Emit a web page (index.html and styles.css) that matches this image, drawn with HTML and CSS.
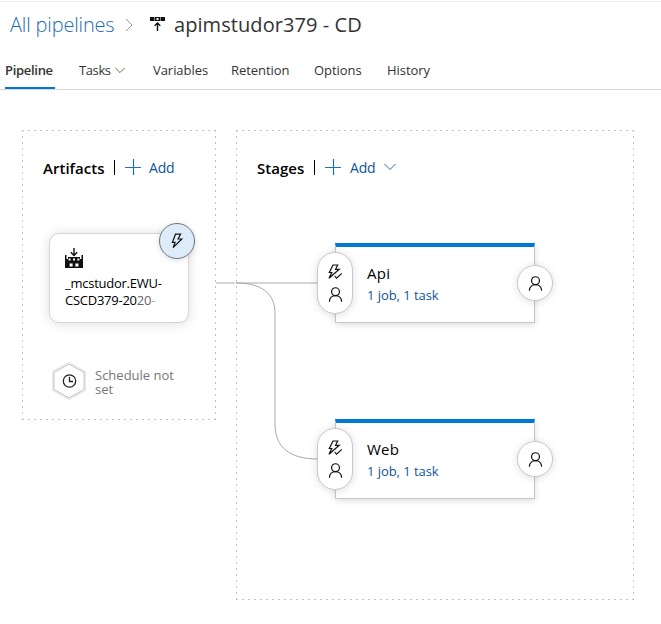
FILE: index.html
```
<!DOCTYPE html>
<html lang="en">
<head>
<meta charset="utf-8">
<title>apimstudor379 - CD</title>
<link rel="stylesheet" href="styles.css">
</head>
<body>
<svg class="symbols" width="0" height="0" aria-hidden="true">
  <symbol id="person" viewBox="0 0 16 16"><circle cx="8" cy="5" r="4.2"/><path d="M1.500 15.800C1.500 11.500 4.600 9.200 8 9.200s6.500 2.300 6.500 6.600"/></symbol>
  <symbol id="bolt" viewBox="0 0 16 16"><path d="M6.500 1.200h5.100L9.100 6h3.700L4.100 14.700l2-5.300H3.400z"/></symbol>
  <symbol id="bolt-check" viewBox="0 0 16 16"><path d="M12.200 5.300H8.600L10.700 1H6L2.300 8.500h2.500L2 14.300z"/><path d="M7.700 12.200l1.900 1.900 5.200-4.700"/></symbol>
  <symbol id="plus" viewBox="0 0 16 16"><path d="M0 8.500h16M8.500 0v16"/></symbol>
  <symbol id="chevron" viewBox="0 0 12 8"><path d="M.5 1L6 6.500 11.500 1"/></symbol>
</svg>
<header class="header">
  <nav class="breadcrumb">
    <a class="crumb">All pipelines</a>
    <svg class="crumb-arrow" viewBox="0 0 8 14"><path d="M1 1l6 6-6 6"/></svg>
    <svg class="release-icon" viewBox="0 0 15 15"><path class="solid" d="M0 0h4.500v4H0zM5 0h5v4H5zM10.500 0H15v4h-4.500z"/><path class="holes" d="M6.500 1h2v2h-2z"/><path class="line" d="M7.500 14V6M4.700 8.800l2.800-2.800 2.800 2.800"/></svg>
    <h1 class="title">apimstudor379 - CD</h1>
  </nav>
  <nav class="tabs">
    <a class="tab tab-active">Pipeline</a>
    <a class="tab tab-tasks">Tasks<svg class="tab-chevron" viewBox="0 0 12 8"><use href="#chevron"/></svg></a>
    <a class="tab tab-variables">Variables</a>
    <a class="tab tab-retention">Retention</a>
    <a class="tab tab-options">Options</a>
    <a class="tab">History</a>
  </nav>
</header>
<main class="canvas">
  <section class="panel artifacts">
    <div class="panel-head">
      <h2 class="heading heading-artifacts">Artifacts</h2><span class="divider"></span>
      <svg class="plus"><use href="#plus"/></svg><a class="add">Add</a>
    </div>
    <div class="artifact">
      <svg class="build-icon" viewBox="0 0 18 20"><path class="solid" d="M0 7h1.500v4H3V9h12v2h1.500V7H18v13H0z"/><path class="holes" d="M3.600 10.500h2v2h-2zM8 10.500h2v2H8zM12.400 10.500h2v2h-2zM4.600 15.500h3v3h-3zM10.400 15.500h3v3h-3z"/><path class="line" d="M9 0v7.500M5.800 4.300L9 7.500l3.200-3.200"/></svg>
      <div class="artifact-name">_mcstudor.EWU-<br>CSCD379-20<span class="fade-a">20</span><span class="fade-b">-</span></div>
      <span class="trigger"><svg class="bolt"><use href="#bolt"/></svg></span>
    </div>
    <div class="schedule">
      <svg class="hexagon" viewBox="0 0 36 40"><path class="hex-halo" d="M18 2.500l15.500 8.500v18L18 37.500 2.500 29V11z"/><path class="hex-edge" d="M18 3.200L33 11.500v17L18 36.800 3 28.500v-17z"/><circle cx="18.500" cy="20" r="6.200"/><path class="hand" d="M18.500 16v4.500H22"/></svg>
      <div class="schedule-text">Schedule not<br>set</div>
    </div>
  </section>
  <section class="panel stages">
    <div class="panel-head">
      <h2 class="heading heading-stages">Stages</h2><span class="divider"></span>
      <svg class="plus"><use href="#plus"/></svg><a class="add add-stage">Add</a><svg class="add-chevron"><use href="#chevron"/></svg>
    </div>
    <article class="stage">
      <span class="pre"><svg class="bolt-check"><use href="#bolt-check"/></svg><svg class="person" viewBox="0 0 16 16"><use href="#person"/></svg></span>
      <h3 class="stage-name">Api</h3><a class="stage-jobs">1 job, 1 task</a>
      <span class="post"><svg class="person" viewBox="0 0 16 16"><use href="#person"/></svg></span>
    </article>
    <article class="stage">
      <span class="pre"><svg class="bolt-check"><use href="#bolt-check"/></svg><svg class="person" viewBox="0 0 16 16"><use href="#person"/></svg></span>
      <h3 class="stage-name">Web</h3><a class="stage-jobs">1 job, 1 task</a>
      <span class="post"><svg class="person" viewBox="0 0 16 16"><use href="#person"/></svg></span>
    </article>
    <svg class="connectors" viewBox="0 0 110 190"><path class="straight" d="M1 7h19M21 7h85"/><path class="curve" d="M21 7c25 0 39 10 39 30"/><path class="straight" d="M60 36v112"/><path class="curve" d="M60 148c0 23 14 35 43 35"/></svg>
  </section>
</main>
</body>
</html>
```
FILE: styles.css
```
* { box-sizing: border-box; }
body { margin: 0; width: 661px; height: 624px; overflow: hidden; background: #fff; color: #333; font-family: "Open Sans", "Noto Sans", sans-serif; font-size: 13px; }
h1, h2, h3 { margin: 0; font-weight: 400; }
svg { display: block; flex: none; fill: none; overflow: visible; }
.symbols { position: absolute; }
.header { height: 89px; margin-top: 1px; border-top: 1px solid #eaeaea; border-bottom: 1px solid #d9d9d9; }
.breadcrumb { display: flex; align-items: center; height: 46px; padding: 0 0 2px 10px; font-size: 20px; white-space: nowrap; }
.crumb { width: 115px; color: #1f6cad; letter-spacing: -0.17px; font-weight: 300; }
.crumb-arrow { width: 8px; height: 14px; stroke: #999; margin-top: 2px; }
.release-icon { width: 15px; height: 15px; margin: 0 9px 0 17px; }
.solid { fill: #111; }
.holes { fill: #fff; }
.line { stroke: #111; stroke-width: 1.4; }
.title { font-size: 20px; letter-spacing: 0.07px; }
.tabs { display: flex; height: 41px; padding-left: 5px; line-height: 45px; white-space: nowrap; }
.tab { letter-spacing: -0.05px; }
.tab-active { width: 50px; margin-right: 24px; font-weight: 600; letter-spacing: -0.3px; border-bottom: 2px solid #0078d4; }
.tab-tasks { display: flex; width: 74px; letter-spacing: -0.4px; }
.tab-chevron { width: 10px; height: 7px; margin: 19px 0 0 4px; stroke: #55764b; stroke-width: 1.2; }
.tab-variables { width: 78px; }
.tab-retention { width: 83px; }
.tab-options { width: 73px; }
.canvas { display: flex; align-items: flex-start; gap: 20px; padding: 40px 0 0 22px; }
.panel {
  position: relative;
  background:
    repeating-linear-gradient(90deg, #c3c3c3 0 2px, transparent 2px 6px) 0 0 / 100% 1px no-repeat,
    repeating-linear-gradient(90deg, #c3c3c3 0 2px, transparent 2px 6px) 0 100% / 100% 1px no-repeat,
    repeating-linear-gradient(#c3c3c3 0 2px, transparent 2px 6px) 0 0 / 1px 100% no-repeat,
    repeating-linear-gradient(#c3c3c3 0 2px, transparent 2px 6px) 100% 0 / 1px 100% no-repeat;
}
.artifacts { width: 194px; height: 290px; padding: 28px 0 0 21px; }
.stages { width: 398px; height: 470px; padding: 28px 0 0 21px; }
.panel-head { display: flex; align-items: center; height: 20px; }
.heading { color: #000; font-size: 15px; font-weight: 600; letter-spacing: 0.02px; white-space: nowrap; }
.heading-artifacts { width: 71px; }
.heading-stages { width: 57px; }
.divider { width: 1px; height: 15px; background: #000; margin: -2px 10px 0 0; }
.plus { width: 16px; height: 16px; stroke: #2372b5; stroke-width: 1.2; margin: -2px 8px 0 0; }
.add { color: #10559b; font-size: 14px; line-height: 18px; letter-spacing: -0.2px; }
.add-stage { margin-left: 1px; }
.add-chevron { width: 12px; height: 8px; stroke: #2372b5; margin: -2px 0 0 9px; }
.artifact { position: relative; width: 140px; height: 90px; margin: 55px 0 0 6px; padding: 14px 15px; border: 1px solid #d5d5d5; border-radius: 10px; box-shadow: 0 1px 12px #0002; background: #fff; }
.build-icon { width: 18px; height: 20px; }
.artifact-name { margin-top: 7px; color: #000; line-height: 17px; letter-spacing: -0.25px; white-space: nowrap; }
.fade-a { color: #666; }
.fade-b { color: #aaa; }
.trigger { position: absolute; top: -11px; right: -7px; width: 36px; height: 36px; display: grid; place-items: center; background: #deecf9; border: 1px solid #6e7780; border-radius: 50%; box-shadow: 0 1px 6px #0002; }
.bolt, .bolt-check { width: 16px; height: 16px; stroke: #111; stroke-width: 1.2; }
.schedule { display: flex; margin: 38px 0 0 8px; }
.hexagon { width: 36px; height: 40px; margin-right: 8px; stroke: #222; stroke-width: 1.3; }
.hex-halo { stroke: #eaeaea; stroke-width: 3; }
.hex-edge { stroke: #c8c8c8; stroke-width: 1; fill: #fff; }
.schedule-text { padding-top: 7px; line-height: 14px; color: #777; white-space: nowrap; }
.stage { position: relative; width: 200px; height: 80px; margin: 96px 0 0 78px; padding: 15px 0 0 31px; border: 1px solid #c8c8c8; border-top: 4px solid #0078d4; background: #fff; box-shadow: 0 2px 6px #0002; }
.panel-head + .stage { margin-top: 65px; }
.stage-name { color: #000; font-size: 15px; line-height: 22px; letter-spacing: 0.25px; }
.stage-jobs { display: block; margin-top: 2px; line-height: 18px; color: #10559b; letter-spacing: -0.05px; }
.pre, .post { position: absolute; z-index: 1; background: #fff; border: 1px solid #c8c8c8; border-radius: 18px; box-shadow: 0 1px 8px #0002; }
.pre { left: -19px; top: 5px; width: 36px; height: 62px; display: flex; flex-direction: column; align-items: center; gap: 7px; padding-top: 11px; }
.post { right: -19px; top: 18px; width: 36px; height: 36px; display: grid; place-items: center; }
.person { width: 15px; height: 15px; stroke: #111; stroke-width: 1.3; }
.connectors { position: absolute; left: -21px; top: 146px; width: 110px; height: 190px; }
.straight { stroke: #c8c8c8; stroke-width: 1.5; }
.curve { stroke: #aaa; stroke-width: 1; }
```
